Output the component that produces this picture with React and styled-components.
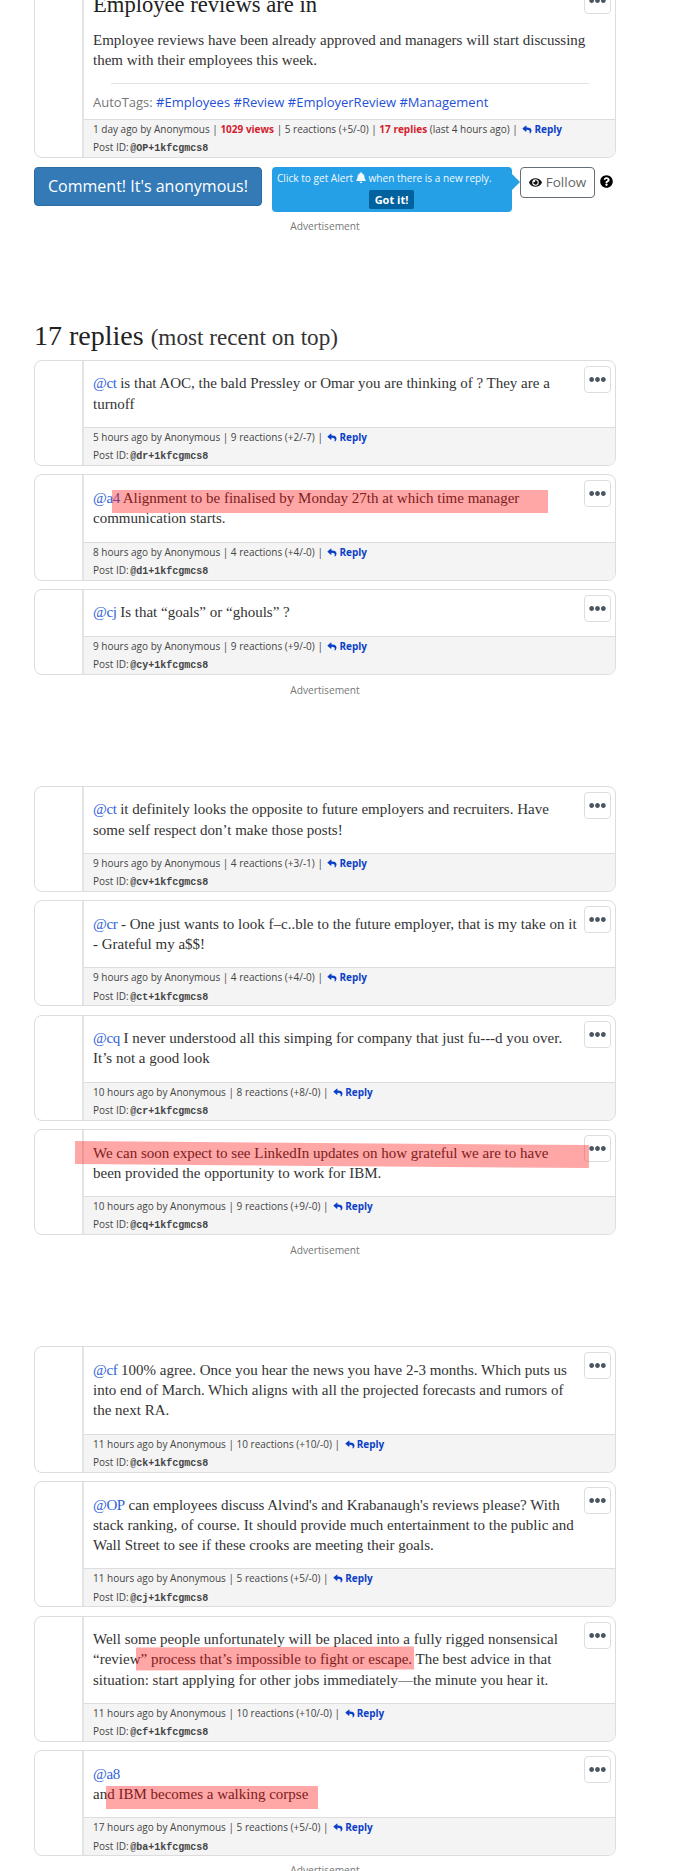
import React from 'react'
import styled, { createGlobalStyle } from 'styled-components'
import { FaBell, FaEllipsisH, FaEye, FaQuestionCircle, FaReply } from 'react-icons/fa'

const serif = '"Liberation Serif", "Times New Roman", serif'
const sans = '"Open Sans", "Noto Sans", sans-serif'

const GlobalStyle = createGlobalStyle`
  html, body { margin: 0; padding: 0; background: #fff; }
  body { font-family: ${sans}; color: #333; }
`

const Page = styled.div`
  height: 1871px;
  overflow: hidden;
  padding: 0 71px 0 34px;
  box-sizing: border-box;
`

const Card = styled.article`
  position: relative;
  display: grid;
  grid-template-columns: 49px 1fr;
  margin-bottom: 8.2px;
  border: 1px solid #ddd;
  border-radius: 8px;
  overflow: hidden;
  background: #fff;
  &:first-child { margin-top: -19px; }
`

const Gutter = styled.div`
  border-right: 2px solid #e4e4e4;
`

const Main = styled.div`
  min-width: 0;
`

const Body = styled.div`
  padding: 12.5px 9px ${p => (p.$flush ? 0 : '13.3px')};
  font: 15px/20.2px ${serif};
  color: #333;
  white-space: nowrap;
`

const Title = styled.h1`
  margin: -2px 0 13px;
  font: 400 22.6px/24px ${serif};
  color: #222;
`

const Mention = styled.a`
  color: #2f62d8;
  letter-spacing: -0.4px;
`

const Rule = styled.hr`
  height: 0;
  margin: 13px 17px 0 18px;
  border: 0;
  border-top: 1px solid #e2e2e2;
`

const Tags = styled.div`
  padding: 8px 9px 7px;
  font: 13px/20px ${sans};
  color: #777;
  a { color: #1f50d8; }
`

const Footer = styled.footer`
  height: 38px;
  box-sizing: border-box;
  padding: 0 9px;
  border-top: 1px solid #ddd;
  background: #f4f4f4;
  font: 10px/18.2px ${sans};
  color: #444;
  white-space: nowrap;
`

const Hot = styled.b`
  color: #d4212e;
`

const ReplyLink = styled.a`
  margin-left: 2px;
  font-weight: 700;
  color: #0c3fc8;
  svg { width: 10px; height: 9px; margin-right: 2px; vertical-align: -1px; }
`

const PostId = styled.code`
  margin-left: -1px;
  font: 700 10px "Liberation Mono", monospace;
  color: #444;
`

const MenuButton = styled.button`
  position: absolute;
  top: 5px;
  right: 4px;
  width: 27px;
  height: 27px;
  padding: 0;
  display: flex;
  align-items: center;
  justify-content: center;
  border: 1px solid #ddd;
  border-radius: 4px;
  background: #fff;
  color: #4a5661;
  svg { width: 17px; height: 17px; }
`

const Marker = styled.span`
  position: absolute;
  left: ${p => p.$left}px;
  top: ${p => p.$top}px;
  width: ${p => p.$width}px;
  height: 22.5px;
  background: rgba(255, 0, 0, 0.35);
  transform: rotate(${p => p.$tilt || 0}deg);
`

const ActionRow = styled.div`
  display: flex;
  align-items: flex-start;
  margin-top: 9px;
`

const CommentButton = styled.button`
  width: 228px;
  height: 39px;
  padding: 0;
  border: 1px solid #2e6da4;
  border-radius: 4px;
  background: #337ab7;
  color: #fff;
  font: 16px ${sans};
`

const AlertBubble = styled.div`
  position: relative;
  width: 240px;
  height: 45px;
  margin-left: 10px;
  padding: 3px 5px;
  box-sizing: border-box;
  border-radius: 4px;
  background: #259fe6;
  color: #f2f9fe;
  font: 10.1px/16px ${sans};
  text-align: left;
  white-space: nowrap;
  svg { width: 10px; height: 11px; vertical-align: -1px; }
  &::after {
    content: "";
    position: absolute;
    top: 7px;
    left: 100%;
    border: 8px solid transparent;
    border-left-color: #259fe6;
  }
`

const GotIt = styled.button`
  display: block;
  width: 45px;
  height: 19px;
  margin: 4px 0 0 92px;
  padding: 0;
  border: 0;
  border-radius: 2px;
  background: #00619f;
  color: #fff;
  font: 700 11px ${sans};
`

const FollowButton = styled.button`
  display: flex;
  align-items: center;
  justify-content: center;
  gap: 4px;
  width: 75px;
  height: 31px;
  margin-left: 8px;
  padding: 0;
  border: 1px solid #666e78;
  border-radius: 4px;
  background: #fff;
  color: #666;
  font: 13.5px ${sans};
  svg { color: #111; width: 13px; height: 13px; }
`

const Help = styled.span`
  display: flex;
  margin: 8px 0 0 5px;
  color: #000;
  svg { width: 13px; height: 13px; }
`

const AdLabel = styled.div`
  height: ${p => p.$height}px;
  margin-top: ${p => p.$pull || 0}px;
  padding-top: ${p => p.$pad}px;
  box-sizing: border-box;
  font: 10.2px/16px ${sans};
  color: #777;
  text-align: center;
`

const RepliesHeading = styled.h2`
  margin: 0 0 7px;
  height: 35px;
  font: 400 28px/36px ${serif};
  color: #222;
  small { font-size: 23.2px; color: #333; }
`

const replies = [
  { ago: '5 hours', total: 9, split: '+2/-7', id: '@dr+1kfcgmcs8', text: <><Mention>@ct</Mention> is that AOC, the bald Pressley or Omar you are thinking of ? They are a<br />turnoff</> },
  { ago: '8 hours', total: 4, split: '+4/-0', id: '@d1+1kfcgmcs8', marker: { left: 77, top: 15, width: 436 }, text: <><Mention>@a4</Mention> Alignment to be finalised by Monday 27th at which time manager<br />communication starts.</> },
  { ago: '9 hours', total: 9, split: '+9/-0', id: '@cy+1kfcgmcs8', adAfter: true, text: <><Mention>@cj</Mention> Is that “goals” or “ghouls” ?</> },
  { ago: '9 hours', total: 4, split: '+3/-1', id: '@cv+1kfcgmcs8', text: <><Mention>@ct</Mention> it definitely looks the opposite to future employers and recruiters. Have<br />some self respect don’t make those posts!</> },
  { ago: '9 hours', total: 4, split: '+4/-0', id: '@ct+1kfcgmcs8', text: <><Mention>@cr</Mention> - One just wants to look f–c..ble to the future employer, that is my take on it<br />- Grateful my a$$!</> },
  { ago: '10 hours', total: 8, split: '+8/-0', id: '@cr+1kfcgmcs8', text: <><Mention>@cq</Mention> I never understood all this simping for company that just fu---d you over.<br />It’s not a good look</> },
  { ago: '10 hours', total: 9, split: '+9/-0', id: '@cq+1kfcgmcs8', adAfter: true, marker: { left: 40, top: 12.5, width: 514, tilt: 0.45 }, text: <>We can soon expect to see LinkedIn updates on how grateful we are to have<br />been provided the opportunity to work for IBM.</> },
  { ago: '11 hours', total: 10, split: '+10/-0', id: '@ck+1kfcgmcs8', text: <><Mention>@cf</Mention> 100% agree. Once you hear the news you have 2-3 months. Which puts us<br />into end of March. Which aligns with all the projected forecasts and rumors of<br />the next RA.</> },
  { ago: '11 hours', total: 5, split: '+5/-0', id: '@cj+1kfcgmcs8', text: <><Mention>@OP</Mention> can employees discuss Alvind's and Krabanaugh's reviews please? With<br />stack ranking, of course. It should provide much entertainment to the public and<br />Wall Street to see if these crooks are meeting their goals.</> },
  { ago: '11 hours', total: 10, split: '+10/-0', id: '@cf+1kfcgmcs8', marker: { left: 101, top: 30.5, width: 278, tilt: -0.2 }, text: <>Well some people unfortunately will be placed into a fully rigged nonsensical<br />“review” process that’s impossible to fight or escape. The best advice in that<br />situation: start applying for other jobs immediately—the minute you hear it.</> },
  { ago: '17 hours', total: 5, split: '+5/-0', id: '@ba+1kfcgmcs8', marker: { left: 71, top: 35, width: 212 }, text: <><Mention>@a8</Mention><br />and IBM becomes a walking corpse</> },
]

const Reply = ({ ago, total, split, id, text, marker }) => (
  <Card>
    <Gutter />
    <Main>
      <Body>{text}</Body>
      <Footer>
        {ago} ago by Anonymous | {total} reactions ({split}) | <ReplyLink><FaReply />Reply</ReplyLink>
        <br />
        Post ID: <PostId>{id}</PostId>
      </Footer>
    </Main>
    <MenuButton><FaEllipsisH /></MenuButton>
    {marker && <Marker $left={marker.left} $top={marker.top} $width={marker.width} $tilt={marker.tilt} />}
  </Card>
)

export default function App() {
  return (
    <>
      <GlobalStyle />
      <Page>
        <Card>
          <Gutter />
          <Main>
            <Body $flush>
              <Title>Employee reviews are in</Title>
              Employee reviews have been already approved and managers will start discussing<br />
              them with their employees this week.
              <Rule />
            </Body>
            <Tags>AutoTags: <a>#Employees</a> <a>#Review</a> <a>#EmployerReview</a> <a>#Management</a></Tags>
            <Footer>
              1 day ago by Anonymous | <Hot>1029 views</Hot> | 5 reactions (+5/-0) | <Hot>17 replies</Hot> (last 4 hours ago) | <ReplyLink><FaReply />Reply</ReplyLink>
              <br />
              Post ID: <PostId>@OP+1kfcgmcs8</PostId>
            </Footer>
          </Main>
          <MenuButton><FaEllipsisH /></MenuButton>
        </Card>

        <ActionRow>
          <CommentButton>Comment! It's anonymous!</CommentButton>
          <AlertBubble>
            Click to get Alert <FaBell /> when there is a new reply.
            <GotIt>Got it!</GotIt>
          </AlertBubble>
          <FollowButton><FaEye />Follow</FollowButton>
          <Help><FaQuestionCircle /></Help>
        </ActionRow>

        <AdLabel $height={106} $pad={6}>Advertisement</AdLabel>
        <RepliesHeading>17 replies <small>(most recent on top)</small></RepliesHeading>

        {replies.map(r => (
          <React.Fragment key={r.id}>
            <Reply {...r} />
            {r.adAfter && <AdLabel $pull={-8} $height={111} $pad={7}>Advertisement</AdLabel>}
          </React.Fragment>
        ))}
        <AdLabel $pull={-8} $height={30} $pad={5}>Advertisement</AdLabel>
      </Page>
    </>
  )
}
